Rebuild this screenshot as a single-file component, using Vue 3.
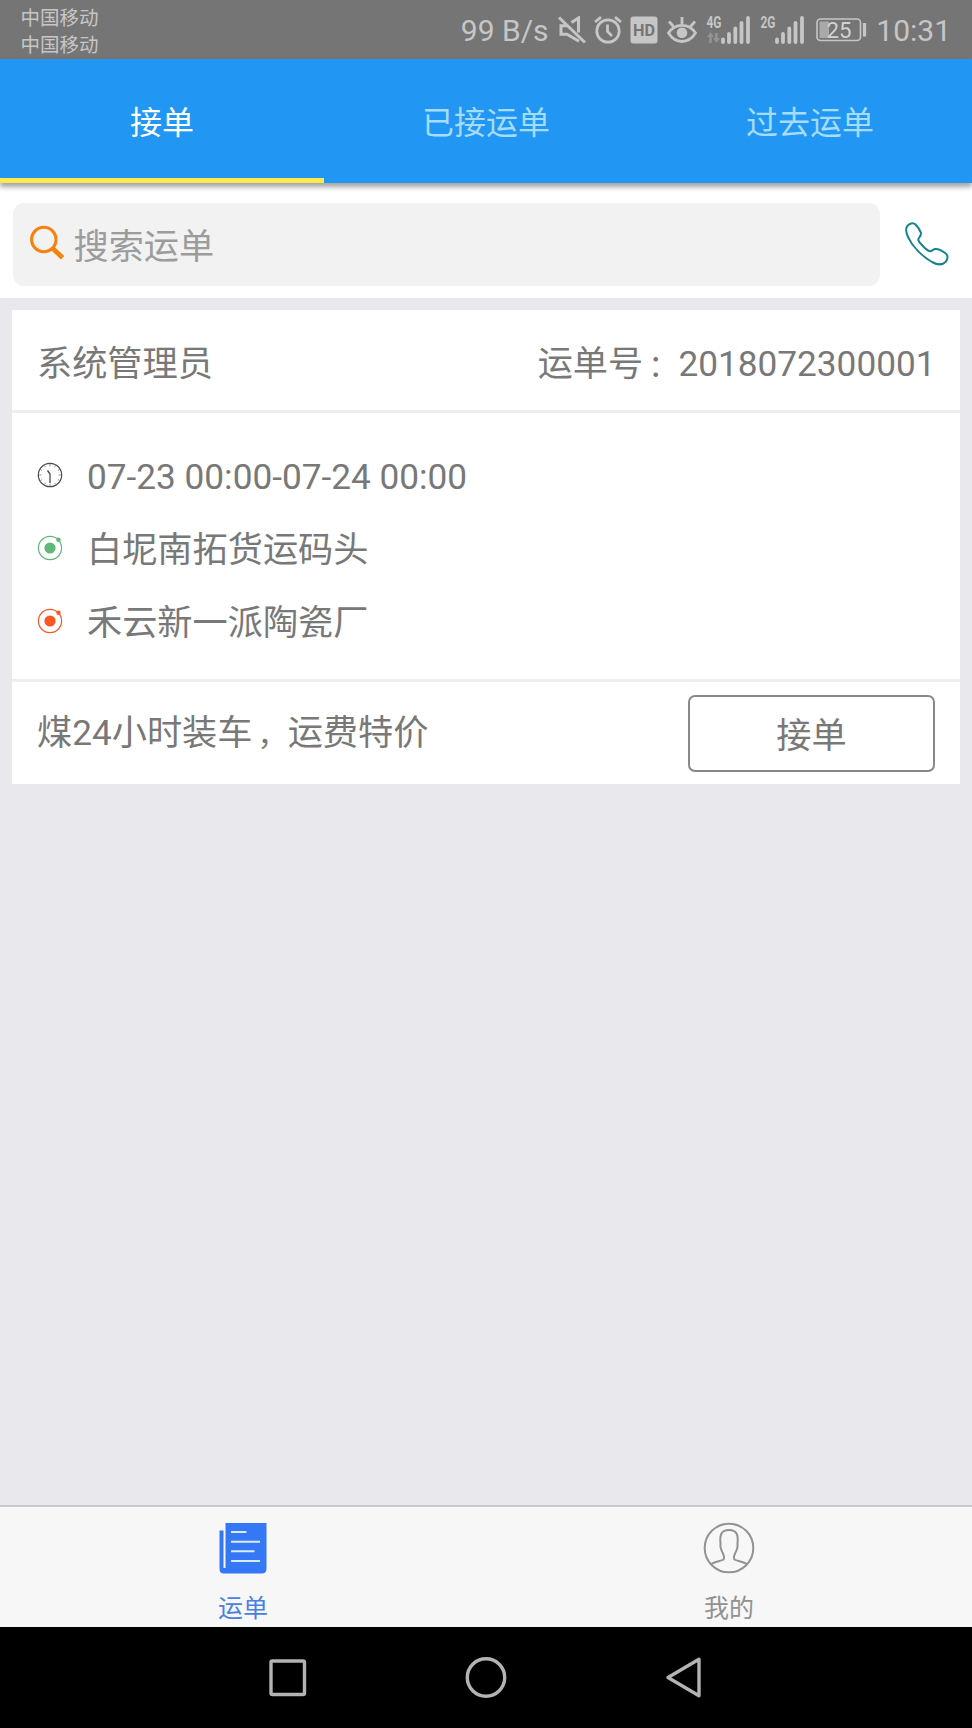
<script setup>
const tabs = [
  { label: '接单', active: true },
  { label: '已接运单', active: false },
  { label: '过去运单', active: false }
]
const places = [
  { name: '白坭南拓货运码头', kind: 'from' },
  { name: '禾云新一派陶瓷厂', kind: 'to' }
]
</script>

<template>
  <div class="screen">
    <header class="status">
      <div class="carriers">
        <span>中国移动</span>
        <span>中国移动</span>
      </div>
      <div class="indicators">
        <span class="speed">99 B/s</span>
        <svg class="ico-mute" width="28" height="28" viewBox="0 0 28 28" fill="none" stroke="#c6c6c6" stroke-width="3">
          <path d="M1 1.5 27 26.5" />
          <path d="M9 9.800H3v8.400h6l12 7M13.500 6.500 20.500 2v14.500" />
        </svg>
        <svg class="ico-alarm" width="28" height="28" viewBox="0 0 28 28" fill="none" stroke="#c6c6c6" stroke-width="2.800">
          <circle cx="14" cy="15" r="11.2" />
          <path d="M13.500 8.500v7l4.500 4.500M1 6l6-4.800M27 6l-6-4.800" />
        </svg>
        <svg class="ico-hd" width="28" height="28" viewBox="0 0 28 28">
          <rect x="0.500" y="0.500" width="27" height="27" rx="3" fill="#c6c6c6" />
          <text x="3" y="20" textLength="22" lengthAdjust="spacingAndGlyphs" class="hd">HD</text>
        </svg>
        <svg class="ico-eye" width="30" height="28" viewBox="0 0 30 28" fill="none" stroke="#c6c6c6" stroke-width="2.800">
          <path d="M1.500 17C5 11.500 10 9.300 15 9.300S25 11.500 28.500 17C25 22.500 20 25.500 15 25.500S5 22.500 1.500 17Z" />
          <circle cx="15" cy="16.800" r="5.300" fill="#c6c6c6" stroke="none" />
          <path d="M15 1v7M2 5.500l4.500 5M28 5.500l-4.500 5" />
        </svg>
        <svg class="ico-sig" width="45" height="38" viewBox="0 -8 45 38">
          <text x="0.500" y="13" textLength="15" lengthAdjust="spacingAndGlyphs" class="net">4G</text>
          <path d="M1 22 4.500 17 8 22H5.800v6H3.200v-6ZM7 23h2v-5h2.500v5H14l-3.500 5Z" fill="#939393" />
          <path d="M17 24.500v2.500M23 19v8M29.300 13.500V27M35.500 8v19M42 3v24" stroke="#c6c6c6" stroke-width="3.800" stroke-linecap="round" />
        </svg>
        <svg class="ico-sig2" width="45" height="38" viewBox="0 -8 45 38">
          <text x="0.500" y="13" textLength="15" lengthAdjust="spacingAndGlyphs" class="net">2G</text>
          <path d="M17 24.500v2.500M23 19v8M29.300 13.500V27M35.500 8v19M42 3v24" stroke="#c6c6c6" stroke-width="3.800" stroke-linecap="round" />
        </svg>
        <svg class="ico-batt" width="51" height="24" viewBox="0 0 51 24">
          <rect x="1" y="1" width="43.500" height="21.500" rx="3.500" fill="none" stroke="#c6c6c6" stroke-width="1.600" />
          <rect x="3.500" y="3.500" width="9.500" height="16.500" fill="#a9a9a9" />
          <path d="M48.500 5v13.500" stroke="#c6c6c6" stroke-width="3.200" />
          <text x="10.500" y="19.500" textLength="25" lengthAdjust="spacingAndGlyphs" class="batt">25</text>
        </svg>
        <span class="clock">10:31</span>
      </div>
    </header>

    <nav class="tabs">
      <div v-for="t in tabs" :key="t.label" class="tab" :class="{ active: t.active }">{{ t.label }}</div>
    </nav>

    <section class="search">
      <div class="field">
        <svg width="36" height="36" viewBox="0 0 36 36" fill="none" stroke="#f5820c">
          <circle cx="14.800" cy="14.500" r="12.200" stroke-width="3.100" />
          <path d="M23.800 23.500 33.600 32.700" stroke-width="4.800" />
        </svg>
        <span>搜索运单</span>
      </div>
      <svg class="phone" width="46" height="46" viewBox="0 0 46 46" fill="none" stroke="#16858a" stroke-width="2" stroke-linejoin="round">
        <path d="M3 5.500C5 2.500 9 1 11.500 3.500C13.500 5.500 15.500 8.500 16.800 11.500C18 15 14 16.500 14.300 18.800C14.800 21.500 22.500 29.500 26 30.300C28 30.500 28.500 28.500 31 28C34 27.500 38.500 30 41.200 32C44.500 34.500 44 38 41.500 41C38 44.500 33.500 44 28 41C18.500 35.500 9 26 4.500 17C2.500 13 1 9 3 5.500Z" />
      </svg>
    </section>

    <main class="list">
      <article class="card">
        <div class="head">
          <span>系统管理员</span>
          <span>运单号<span class="punct">：</span>2018072300001</span>
        </div>
        <div class="body">
          <div class="row">
            <svg width="26" height="26" viewBox="0 0 26 26" fill="none" stroke="#4a4a4a">
              <circle cx="13" cy="13" r="11.700" stroke-width="1.200" />
              <path d="M13 2v2.500M13 21.500V24M2 13h2.500M21.500 13H24M7.500 3.500l1 1.700M18.500 3.500l-1 1.700M3.500 7.500l1.600 1M22.500 7.500l-1.600 1M3.500 18.500l1.600-1M22.500 18.500l-1.600-1M7.500 22.500l1-1.700M18.500 22.500l-1-1.700" stroke-width="0.600" />
              <path d="M10.500 8.500 13 12V21" stroke-width="1.300" />
            </svg>
            <span>07-23 00:00-07-24 00:00</span>
          </div>
          <div v-for="p in places" :key="p.kind" class="row">
            <svg :class="p.kind" width="26" height="26" viewBox="0 0 26 26">
              <circle cx="13" cy="13" r="11.600" fill="none" stroke="currentColor" stroke-width="1.200" />
              <circle cx="13" cy="13" r="5.600" fill="currentColor" />
              <circle cx="21.500" cy="4.800" r="2.200" fill="currentColor" />
            </svg>
            <span>{{ p.name }}</span>
          </div>
        </div>
        <div class="foot">
          <span>煤24小时装车<span class="punct">，</span>运费特价</span>
          <button class="accept">接单</button>
        </div>
      </article>
    </main>

    <footer class="bottom">
      <div class="item current">
        <svg width="52" height="52" viewBox="0 0 52 52">
          <path d="M8.500 1H49.500V46.500Q49.500 51.500 45 51.500H7Q2.500 51.500 2.500 47V8.500H6.500V46H8.500Z" fill="#3478f6" />
          <path d="M14 10H29.500M14 19.700H43M14 29.300H37.500M14 39H43" stroke="#d9ebff" stroke-width="2" />
        </svg>
        <span>运单</span>
      </div>
      <div class="item">
        <svg width="52" height="52" viewBox="0 0 52 52" fill="none" stroke="#929292" stroke-width="2">
          <circle cx="26" cy="26" r="24.300" />
          <path d="M8.500 42C11 40 18 39 20.700 37.500C21.500 35.500 21 33.500 20 31.500C18 28 17 25 17.500 21.500C16.500 12.500 18.500 8 26 8S35.500 12.500 34.500 21.500C35 25 34 28 32 31.500C31 33.500 30.500 35.500 31.300 37.500C34 39 41 40 43.500 42" />
        </svg>
        <span>我的</span>
      </div>
    </footer>

    <div class="sysnav">
      <svg width="40" height="44" viewBox="0 0 40 44"><rect x="3" y="5" width="33.500" height="33.500" rx="1.500" /></svg>
      <svg width="44" height="44" viewBox="0 0 44 44"><circle cx="22" cy="21.500" r="18.700" /></svg>
      <svg width="40" height="44" viewBox="0 0 40 44"><path d="M4 21.500 35 3.300V39.700Z" /></svg>
    </div>
  </div>
</template>

<style>
body {
  margin: 0;
}
</style>

<style scoped>
.screen {
  width: 972px;
  height: 1728px;
  display: flex;
  flex-direction: column;
  overflow: hidden;
  background: #e8e8ed;
  color: #787878;
  font-family: Roboto, "Noto Sans CJK SC", sans-serif;
  font-size: 35.2px;
}
svg {
  display: block;
  flex: none;
}
.status {
  height: 59px;
  flex: none;
  box-sizing: border-box;
  display: flex;
  justify-content: space-between;
  padding: 0 21px 0 20.5px;
  background: #757575;
  color: #c6c6c6;
}
.carriers {
  display: flex;
  flex-direction: column;
  padding-top: 5px;
  font-size: 19.5px;
  line-height: 27px;
}
.indicators {
  display: flex;
  align-items: flex-start;
  font-size: 30px;
  line-height: 36px;
}
.speed {
  padding-top: 13px;
  width: 97px;
  white-space: nowrap;
}
.ico-mute { margin-top: 16px; }
.ico-alarm { margin: 16px 0 0 8px; }
.ico-hd { margin: 16px 0 0 8px; }
.ico-eye { margin: 16px 0 0 9px; }
.ico-sig { margin: 7px 0 0 9px; }
.ico-sig2 { margin: 7px 0 0 9px; }
.ico-batt { margin: 18px 0 0 11.500px; }
.clock {
  padding-top: 13px;
  margin-left: 9px;
}
.hd {
  font-size: 17px;
  font-weight: 700;
  fill: #757575;
}
.net {
  font-size: 16px;
  font-weight: 700;
  fill: #c6c6c6;
}
.batt {
  font-size: 22.500px;
  fill: #d2d2d2;
}
.tabs {
  position: relative;
  height: 124px;
  flex: none;
  display: flex;
  background: #2196f3;
  box-shadow: 0 4px 5px rgba(0, 0, 0, 0.36);
}
.tab {
  flex: 1;
  box-sizing: border-box;
  padding-top: 5px;
  line-height: 118px;
  text-align: center;
  font-size: 32px;
  color: #a6dcfb;
  border-bottom: 5px solid transparent;
}
.tab.active {
  color: #fff;
  border-color: #ffe94b;
}
.search {
  height: 115px;
  flex: none;
  box-sizing: border-box;
  display: flex;
  align-items: flex-start;
  padding: 20px 0 0 13px;
  background: #fff;
}
.field {
  width: 867px;
  height: 83px;
  box-sizing: border-box;
  display: flex;
  align-items: flex-start;
  gap: 9px;
  padding: 22px 0 0 15.500px;
  border-radius: 11px;
  background: #f2f2f2;
  color: #9c9c9c;
}
.field span {
  line-height: 44px;
}
.phone {
  margin: 18px 0 0 24px;
}
.list {
  flex: 1;
  padding: 12px 12.500px 0 12px;
}
.card {
  background: #fff;
}
.head {
  height: 100px;
  box-sizing: border-box;
  display: flex;
  justify-content: space-between;
  padding: 8px 24px 0 25px;
  line-height: 92px;
}
.body {
  height: 272px;
  box-sizing: border-box;
  padding: 28px 26px 0;
  border-top: 3px solid #eeeeee;
  border-bottom: 3px solid #eeeeee;
}
.row {
  height: 73px;
  display: flex;
  align-items: center;
  gap: 24px;
  line-height: 73px;
}
.row svg {
  margin: -6px 0 0 -1px;
}
.from { color: #60b877; }
.to { color: #fc5624; }
.punct {
  display: inline-block;
  box-sizing: border-box;
  width: 35.200px;
  padding-left: 5px;
  font-size: 30px;
  line-height: 35px;
}
.foot {
  height: 102px;
  display: flex;
  justify-content: space-between;
  align-items: flex-start;
  padding: 0 24.500px 0 25px;
  line-height: 102px;
}
.accept {
  width: 247px;
  height: 77px;
  margin: 13px 0 0;
  padding: 4px 0 0;
  box-sizing: border-box;
  border: 2px solid #888;
  border-radius: 7px;
  background: #fff;
  color: inherit;
  font: inherit;
  line-height: 71px;
}
.bottom {
  height: 122px;
  flex: none;
  box-sizing: border-box;
  display: flex;
  border-top: 2px solid #c9c9cb;
  background: #f7f7f7;
}
.item {
  flex: 1;
  display: flex;
  flex-direction: column;
  align-items: center;
  padding-top: 15px;
  font-size: 25px;
  line-height: 30px;
  color: #929292;
}
.item span {
  margin-top: 20px;
}
.item.current {
  color: #4a80e0;
}
.sysnav {
  height: 101px;
  flex: none;
  display: flex;
  justify-content: center;
  align-items: center;
  gap: 156px;
  background: #000;
}
.sysnav svg {
  fill: none;
  stroke: #b3b3b3;
  stroke-width: 3.400;
  stroke-linejoin: round;
}
</style>
